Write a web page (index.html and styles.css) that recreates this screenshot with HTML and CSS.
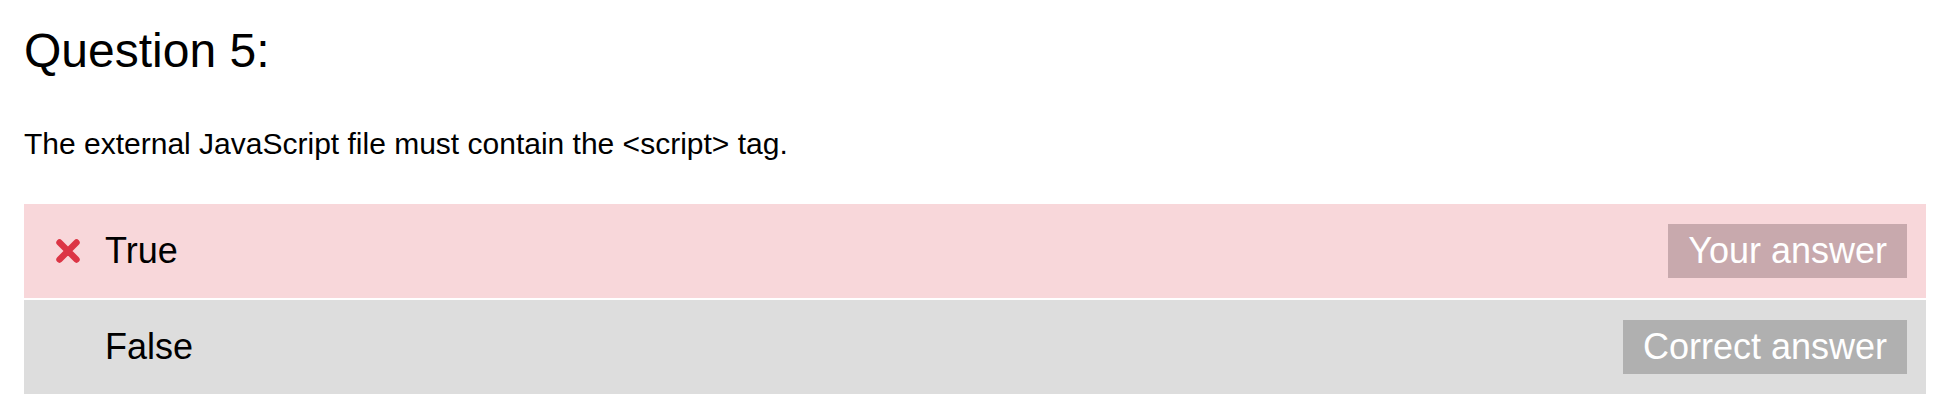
FILE: index.html
```html
<!DOCTYPE html>
<html>
<head>
<meta charset="utf-8">
<link rel="stylesheet" href="styles.css">
</head>
<body>
<div class="quiz">
  <h2 class="title">Question 5:</h2>
  <p class="question">The external JavaScript file must contain the &lt;script&gt; tag.</p>
  <div class="answers">
    <div class="answer wrong">
      <span class="mark">
        <svg width="26" height="26" viewBox="0 0 26 26"><path d="M4.5 4.5 L21.5 21.5 M21.5 4.5 L4.5 21.5" stroke="#dc3545" stroke-width="6.4" stroke-linecap="round" fill="none"/></svg>
      </span>
      <span class="label">True</span>
      <span class="badge badge-yours">Your answer</span>
    </div>
    <div class="answer neutral">
      <span class="mark"></span>
      <span class="label">False</span>
      <span class="badge badge-correct">Correct answer</span>
    </div>
  </div>
</div>
</body>
</html>
```
FILE: styles.css
```css
html, body {
  margin: 0;
  padding: 0;
  background: #ffffff;
}
body {
  font-family: "Liberation Sans", Arial, sans-serif;
  color: #000000;
}
.quiz {
  padding: 23px 24px 0 24px;
}
.title {
  margin: 0;
  font-size: 48px;
  line-height: 56px;
  font-weight: normal;
}
.question {
  margin: 47px 0 0 0;
  font-size: 30px;
  line-height: 36px;
}
.answers {
  margin-top: 42px;
  display: flex;
  flex-direction: column;
  gap: 2px;
}
.answer {
  height: 94px;
  display: flex;
  align-items: center;
  padding: 0 19px 0 31px;
  box-sizing: border-box;
}
.wrong {
  background: #f8d7da;
}
.neutral {
  background: #dddddd;
}
.mark {
  width: 26px;
  height: 26px;
  display: flex;
  align-items: center;
  justify-content: center;
  margin-right: 24px;
  flex: none;
}
.label {
  flex: 1;
  font-size: 36px;
  line-height: 40px;
}
.badge {
  height: 54px;
  display: flex;
  align-items: center;
  padding: 0 20px;
  font-size: 36px;
  color: #ffffff;
}
.badge-yours {
  background: #c8a9ad;
}
.badge-correct {
  background: #b0b0b0;
}
```
